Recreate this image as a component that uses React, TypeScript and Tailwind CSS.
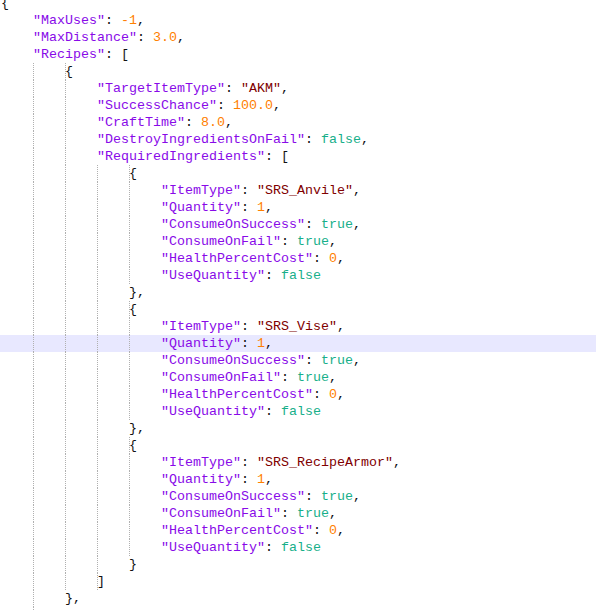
type Line = { level: number; text: string; guide?: boolean; active?: boolean };

const ingredient = (name: string, hl = false): Line[] => [
  { level: 4, text: "{", guide: true },
  { level: 5, text: `"ItemType": "${name}",` },
  { level: 5, text: '"Quantity": 1,', active: hl },
  { level: 5, text: '"ConsumeOnSuccess": true,' },
  { level: 5, text: '"ConsumeOnFail": true,' },
  { level: 5, text: '"HealthPercentCost": 0,' },
  { level: 5, text: '"UseQuantity": false' },
];

const lines: Line[] = [
  { level: 0, text: "{" },
  { level: 1, text: '"MaxUses": -1,' },
  { level: 1, text: '"MaxDistance": 3.0,' },
  { level: 1, text: '"Recipes": [' },
  { level: 2, text: "{", guide: true },
  { level: 3, text: '"TargetItemType": "AKM",' },
  { level: 3, text: '"SuccessChance": 100.0,' },
  { level: 3, text: '"CraftTime": 8.0,' },
  { level: 3, text: '"DestroyIngredientsOnFail": false,' },
  { level: 3, text: '"RequiredIngredients": [' },
  ...ingredient("SRS_Anvile"),
  { level: 4, text: "}," },
  ...ingredient("SRS_Vise", true),
  { level: 4, text: "}," },
  ...ingredient("SRS_RecipeArmor"),
  { level: 4, text: "}" },
  { level: 3, text: "]", guide: true },
  { level: 2, text: "}," },
  { level: 2, text: "" },
];

// tiny json highlighter, notepad++ colours
function tokens(text: string) {
  const out: { t: string; c: string }[] = [];
  const re = /("[^"]*")(\s*:)?|(-?\d+(?:\.\d+)?)|(true|false)|([^"\d\-tf]+|.)/g;
  let m: RegExpExecArray | null;
  while ((m = re.exec(text))) {
    if (m[1]) {
      out.push({ t: m[1], c: m[2] ? "text-[#880ae8]" : "text-[#800000]" });
      if (m[2]) out.push({ t: m[2], c: "text-[#111]" });
    } else if (m[3]) out.push({ t: m[3], c: "text-[#ff8000]" });
    else if (m[4]) out.push({ t: m[4], c: "text-[#18af8a]" });
    else out.push({ t: m[0], c: "text-[#111]" });
  }
  return out;
}

export default function App() {
  return (
    <div className="h-[610px] w-[596px] overflow-hidden bg-white">
      <div className="mt-[-5px] flex flex-col font-['Liberation_Mono','Courier_New',monospace] text-[13.33px]">
        {lines.map((ln, i) => (
          <div
            key={i}
            className={`flex h-[17px] w-full shrink-0 items-stretch pl-px leading-[17px] ${
              ln.active ? "bg-[#e8e8ff]" : ""
            }`}
          >
            {Array.from({ length: ln.level }).map((_, k) => (
              <span
                key={k}
                className={`w-[32px] shrink-0 ${k > 0 ? "border-l border-dotted border-[#b0b0b0]" : ""}`}
              />
            ))}
            {ln.guide && ln.level > 0 && (
              <span className="-mr-px w-px shrink-0 border-l border-dotted border-[#b0b0b0]" />
            )}
            <span className="whitespace-pre">
              {tokens(ln.text).map((tk, j) => (
                <span key={j} className={tk.c}>
                  {tk.t}
                </span>
              ))}
            </span>
          </div>
        ))}
      </div>
    </div>
  );
}
